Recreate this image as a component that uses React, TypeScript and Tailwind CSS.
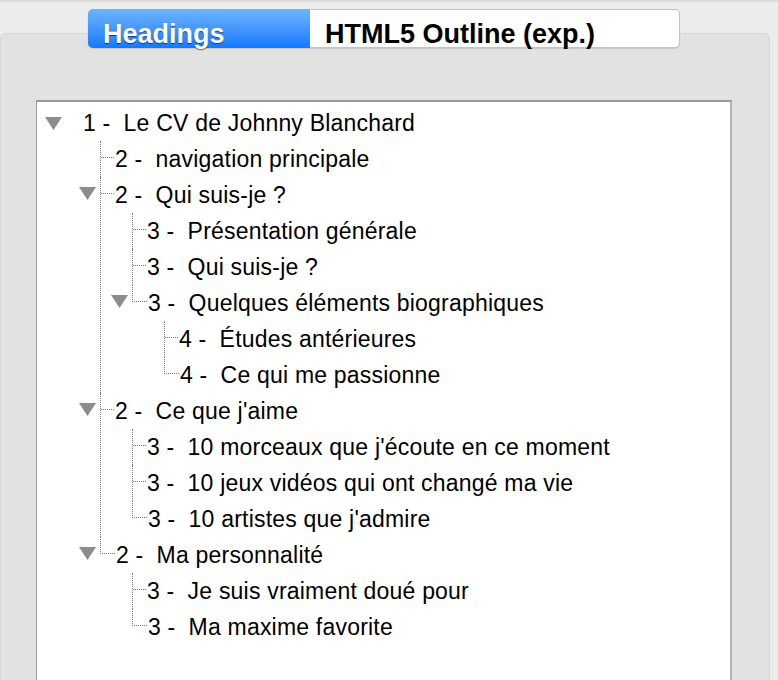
type Node = { n: number; t: string; c?: Node[] }

const tree: Node = {
  n: 1,
  t: 'Le CV de Johnny Blanchard',
  c: [
    { n: 2, t: 'navigation principale' },
    {
      n: 2,
      t: 'Qui suis-je ?',
      c: [
        { n: 3, t: 'Présentation générale' },
        { n: 3, t: 'Qui suis-je ?' },
        {
          n: 3,
          t: 'Quelques éléments biographiques',
          c: [
            { n: 4, t: 'Études antérieures' },
            { n: 4, t: 'Ce qui me passionne' },
          ],
        },
      ],
    },
    {
      n: 2,
      t: "Ce que j'aime",
      c: [
        { n: 3, t: "10 morceaux que j'écoute en ce moment" },
        { n: 3, t: '10 jeux vidéos qui ont changé ma vie' },
        { n: 3, t: "10 artistes que j'admire" },
      ],
    },
    {
      n: 2,
      t: 'Ma personnalité',
      c: [
        { n: 3, t: 'Je suis vraiment doué pour' },
        { n: 3, t: 'Ma maxime favorite' },
      ],
    },
  ],
}

function Triangle() {
  return (
    <svg width="17" height="13" viewBox="0 0 17 13" className="block">
      <polygon points="0,0 17,0 8.5,13" fill="#8c8c8c" />
    </svg>
  )
}

function Label({ node }: { node: Node }) {
  return (
    <span className="whitespace-pre text-[23px] leading-none tracking-[0.2px] text-black">
      {`${node.n} -  ${node.t}`}
    </span>
  )
}

function Branch({ node, last }: { node: Node; last: boolean }) {
  return (
    <div className={last ? 'border-l border-transparent' : 'border-l border-dotted border-[#7a7a7a]'}>
      <div className="relative flex h-9 items-center">
        {last ? (
          <div className="-ml-px mr-px h-[17px] w-[15px] self-start border-b border-l border-dotted border-[#7a7a7a]" />
        ) : (
          <div className="mt-[16px] mr-px w-[13px] self-start border-t border-dotted border-[#7a7a7a]" />
        )}
        {node.c && (
          <div className="absolute left-[-22px] top-[10px]">
            <Triangle />
          </div>
        )}
        <Label node={node} />
      </div>
      {node.c && (
        <div className="ml-[31px]">
          {node.c.map((k, i) => (
            <Branch key={i} node={k} last={i === node.c!.length - 1} />
          ))}
        </div>
      )}
    </div>
  )
}

export default function App() {
  return (
    <div
      className="h-[680px] w-[778px] overflow-hidden border-t-2 border-[#dcdcdc] bg-[#ececec] pt-[7px]"
      style={{ fontFamily: '"Liberation Sans", Arial, sans-serif' }}
    >
      <div className="relative z-10 ml-[88px] flex h-[39px] w-[592px] rounded-[5px] border border-[#c4c4c4] bg-white shadow-[0_1px_1px_rgba(0,0,0,0.12)]">
        <div className="-my-px -ml-px w-[222px] rounded-l-[5px] bg-gradient-to-b from-[#6cb4ff] to-[#0f79ff] pl-[15px] pt-[12px]">
          <span className="text-[27px] font-bold leading-none text-white [text-shadow:0_1px_1px_rgba(0,0,0,0.55)]">
            Headings
          </span>
        </div>
        <div className="pl-[15px] pt-[11px]">
          <span className="text-[27px] font-bold leading-none text-black">HTML5 Outline (exp.)</span>
        </div>
      </div>

      <div className="-mt-[15px] h-[700px] w-[770px] rounded-t-[6px] border border-[#d6d6d6] bg-[#e2e2e2] pl-[35px] pt-[66px]">
        <div className="h-[620px] w-[696px] border-l border-r-2 border-t-2 border-l-[#9a9a9a] border-r-[#b4b4b4] border-t-[#999999] bg-white pt-[3px]">
          <div className="flex h-9 items-center pl-[8px]">
            <div className="mr-[21px]">
              <Triangle />
            </div>
            <Label node={tree} />
          </div>
          <div className="ml-[63px]">
            {tree.c!.map((k, i) => (
              <Branch key={i} node={k} last={i === tree.c!.length - 1} />
            ))}
          </div>
        </div>
      </div>
    </div>
  )
}
